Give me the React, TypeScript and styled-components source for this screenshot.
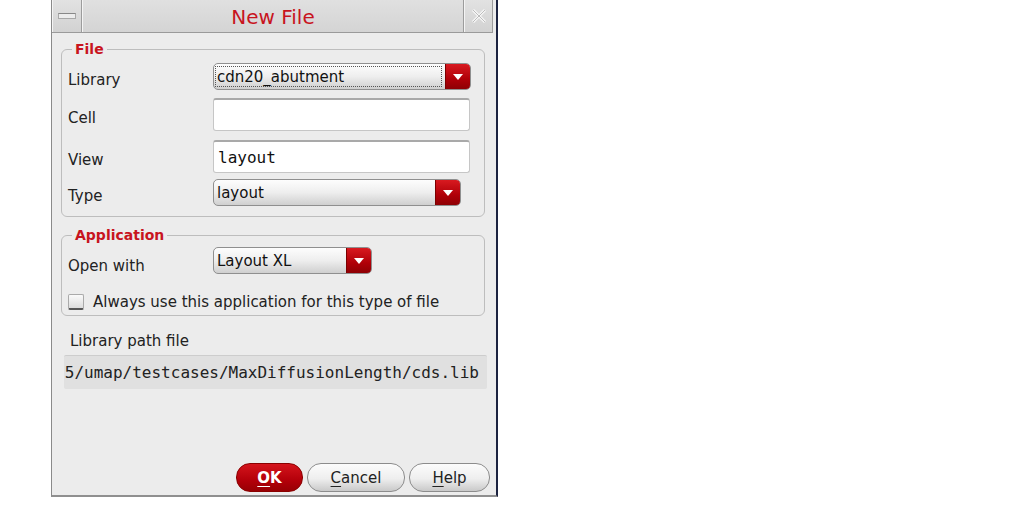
import React from "react";
import styled, { createGlobalStyle } from "styled-components";

const Global = createGlobalStyle`
  html, body { margin: 0; padding: 0; background: #ffffff; }
  body { font-family: "DejaVu Sans", sans-serif; }
`;

const Window = styled.div`
  margin-left: 51px;
  width: 444px;
  height: 495px;
  background: #ececec;
  border-left: 1px solid #8a8a8a;
  border-right: 2px solid #1c2340;
  border-bottom: 2px solid #8f8f8f;
  display: flex;
  flex-direction: column;
`;

const TitleBar = styled.div`
  height: 33px;
  display: flex;
  margin-right: 3px;
  background: #d9d9d9;
  border-bottom: 1px solid #9a9a9a;
  box-sizing: border-box;
`;

const TitleButton = styled.div<{ $w: number }>`
  width: ${(p) => p.$w}px;
  display: flex;
  align-items: center;
  justify-content: center;
  background: linear-gradient(#e2e2e2, #d2d2d2);
  border-left: 1px solid #f4f4f4;
  border-right: 1px solid #9c9c9c;
  box-sizing: border-box;
`;

const MinBar = styled.div`
  width: 16px;
  height: 4px;
  background: #ececec;
  border: 1px solid #a8a8a8;
  border-top-color: #888;
`;

const Title = styled.div`
  flex: 1;
  display: flex;
  align-items: center;
  justify-content: center;
  padding-top: 2px;
  color: #c8141e;
  font-size: 20px;
  background: linear-gradient(#e0e0e0, #d4d4d4);
  border-left: 1px solid #f4f4f4;
  border-right: 1px solid #9c9c9c;
`;

const Body = styled.div`
  flex: 1;
  display: flex;
  flex-direction: column;
  padding: 0 11px 3px 9px;
`;

const Group = styled.fieldset<{ $top: number; $pb: number }>`
  margin: ${(p) => p.$top}px 0 0 0;
  padding: 0 6px ${(p) => p.$pb}px 6px;
  border: 1px solid #bdbdbd;
  border-radius: 6px;
  min-width: 0;
`;

const Legend = styled.legend`
  margin-left: 4px;
  padding: 0 3px 0 3px;
  color: #c8141e;
  font-weight: bold;
  font-size: 14px;
  line-height: 18px;
`;

const Row = styled.div<{ $h: number; $mt: number }>`
  display: grid;
  grid-template-columns: 145px 1fr;
  align-items: center;
  height: ${(p) => p.$h}px;
  margin-top: ${(p) => p.$mt}px;
`;

const Label = styled.span<{ $dy?: number }>`
  font-size: 15px;
  color: #222;
  position: relative;
  top: ${(p) => p.$dy ?? 3}px;
`;

const Combo = styled.div<{ $w: number }>`
  width: ${(p) => p.$w}px;
  height: 27px;
  box-sizing: border-box;
  display: flex;
  border: 1px solid #8f8f8f;
  border-radius: 5px;
  overflow: hidden;
  background: linear-gradient(#fdfdfd 0%, #eeeeee 50%, #cfcfcf 100%);
`;

const ComboText = styled.div<{ $focus?: boolean }>`
  flex: 1;
  display: flex;
  align-items: center;
  font-size: 15px;
  color: #111;
  padding-left: 1px;
  margin: 2px 3px 2px 1px;
  border: 1px dotted ${(p) => (p.$focus ? "#555" : "transparent")};
`;

const Arrow = styled.div`
  width: 24px;
  display: flex;
  align-items: center;
  justify-content: center;
  background: linear-gradient(#d81a20, #b00008 60%, #8e0004);
  border-left: 1px solid #7a0000;
`;

const Tri = styled.div`
  width: 0;
  height: 0;
  border-left: 5px solid transparent;
  border-right: 5px solid transparent;
  border-top: 6px solid #fff;
`;

const TextInput = styled.div`
  width: 257px;
  height: 33px;
  box-sizing: border-box;
  background: #fff;
  border: 1px solid #c6c6c6;
  border-top: 2px solid #a9a9a9;
  border-radius: 3px;
  display: flex;
  align-items: center;
  padding-left: 4px;
  font-family: "DejaVu Sans Mono", monospace;
  font-size: 16px;
  color: #111;
`;

const CheckRow = styled.label`
  display: flex;
  align-items: center;
  gap: 9px;
  margin-top: 19px;
  font-size: 15px;
  color: #222;
`;

const Box = styled.span`
  width: 16px;
  height: 16px;
  box-sizing: border-box;
  border: 1px solid #aaa;
  border-bottom: 2px solid #555;
  border-radius: 2px;
  background: linear-gradient(#fafafa, #dcdcdc);
`;

const PathLabel = styled.div`
  margin: 16px 0 0 9px;
  font-size: 15px;
  color: #222;
`;

const PathField = styled.div`
  margin: 5px -2px 0 3px;
  height: 34px;
  box-sizing: border-box;
  background: #e0e0e0;
  border-top: 1px solid #cdcdcd;
  border-radius: 2px;
  display: flex;
  align-items: center;
  justify-content: flex-end;
  overflow: hidden;
  white-space: nowrap;
  padding-right: 8px;
  font-family: "DejaVu Sans Mono", monospace;
  font-size: 16px;
  color: #222;
`;

const Footer = styled.div`
  margin-top: auto;
  display: flex;
  justify-content: flex-end;
  gap: 4px;
  margin-right: -5px;
`;

const Button = styled.button<{ $w: number; $primary?: boolean }>`
  width: ${(p) => p.$w}px;
  height: 29px;
  border-radius: 14px;
  font-family: "DejaVu Sans", sans-serif;
  font-size: 15px;
  font-weight: ${(p) => (p.$primary ? "bold" : "normal")};
  color: ${(p) => (p.$primary ? "#fff" : "#222")};
  border: 1px solid ${(p) => (p.$primary ? "#8a0000" : "#8c8c8c")};
  background: ${(p) =>
    p.$primary
      ? "linear-gradient(#d4141c, #b4000a 60%, #980004)"
      : "linear-gradient(#fcfcfc, #eeeeee 55%, #c9c9c9)"};
  padding: 0;
  display: flex;
  align-items: center;
  justify-content: center;
  u { text-underline-offset: 3px; }
`;

export default function App() {
  return (
    <>
      <Global />
      <Window>
        <TitleBar>
          <TitleButton $w={30}>
            <MinBar />
          </TitleButton>
          <Title>New File</Title>
          <TitleButton $w={29}>
            <svg width="18" height="18" viewBox="0 0 18 18">
              <path d="M3 3 L15 15 M15 3 L3 15" stroke="#f6f6f6" strokeWidth="3" />
              <path d="M3 3 L15 15 M15 3 L3 15" stroke="#bdbdbd" strokeWidth="1" />
            </svg>
          </TitleButton>
        </TitleBar>
        <Body>
          <Group $top={7} $pb={10}>
            <Legend>File</Legend>
            <Row $h={27} $mt={5}>
              <Label>Library</Label>
              <Combo $w={258}>
                <ComboText $focus>cdn20_abutment</ComboText>
                <Arrow><Tri /></Arrow>
              </Combo>
            </Row>
            <Row $h={33} $mt={8}>
              <Label>Cell</Label>
              <TextInput />
            </Row>
            <Row $h={33} $mt={9}>
              <Label>View</Label>
              <TextInput>layout</TextInput>
            </Row>
            <Row $h={27} $mt={6}>
              <Label>Type</Label>
              <Combo $w={248}>
                <ComboText>layout</ComboText>
                <Arrow><Tri /></Arrow>
              </Combo>
            </Row>
          </Group>
          <Group $top={9} $pb={4}>
            <Legend>Application</Legend>
            <Row $h={27} $mt={3}>
              <Label $dy={5}>Open with</Label>
              <Combo $w={159}>
                <ComboText>Layout XL</ComboText>
                <Arrow><Tri /></Arrow>
              </Combo>
            </Row>
            <CheckRow>
              <Box />
              Always use this application for this type of file
            </CheckRow>
          </Group>
          <PathLabel>Library path file</PathLabel>
          <PathField>5/umap/testcases/MaxDiffusionLength/cds.lib</PathField>
          <Footer>
            <Button $w={67} $primary>
              <u>O</u>K
            </Button>
            <Button $w={98}>
              <u>C</u>ancel
            </Button>
            <Button $w={81}>
              <u>H</u>elp
            </Button>
          </Footer>
        </Body>
      </Window>
    </>
  );
}
